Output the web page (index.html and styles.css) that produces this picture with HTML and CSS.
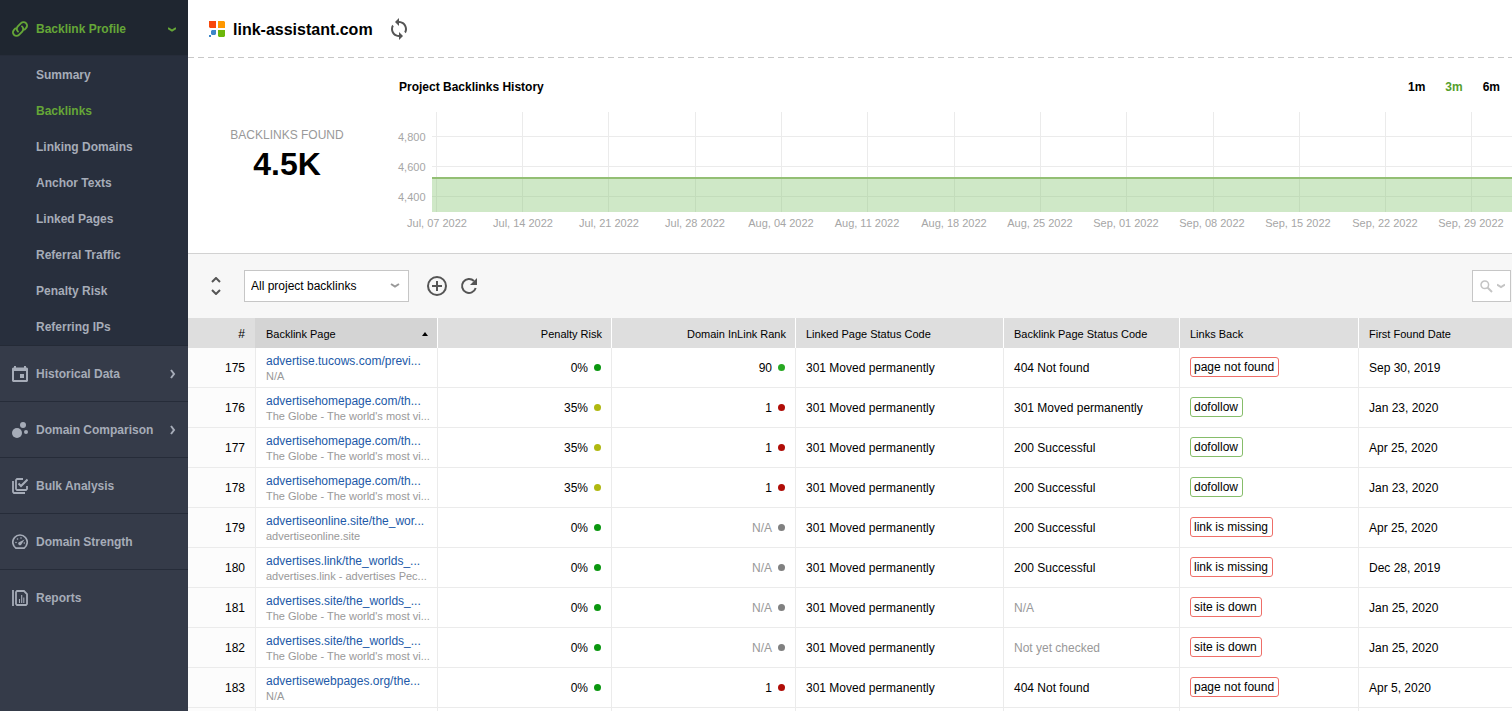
FILE: index.html
```html
<!DOCTYPE html>
<html lang="en">
<head>
<meta charset="utf-8">
<title>link-assistant.com - Backlinks</title>
<link rel="stylesheet" href="styles.css">
</head>
<body>
<div class="app">
  <nav class="sidebar" aria-label="Main">
    <button class="nav-item nav-open" type="button">
      <svg class="icon" width="16" height="16" viewBox="0 0 16 16" fill="none" stroke="currentColor" stroke-width="1.900" stroke-linecap="round"><path d="M6 10.600a3.600 3.600 0 0 1-.2-5.200L9 2.200a3.500 3.500 0 0 1 5 5L12.600 8.600"/><path d="M10 5.400a3.600 3.600 0 0 1 .2 5.200L7 13.800a3.500 3.500 0 0 1-5-5L3.400 7.400"/></svg>
      <span class="nav-label">Backlink Profile</span>
      <svg class="chevron" width="8" height="8" viewBox="0 0 8 8" fill="none" stroke="currentColor" stroke-width="2"><path d="M0 3l4 2.500L8 3"/></svg>
    </button>
    <div class="submenu">
      <a class="sub-link" href="#">Summary</a>
      <a class="sub-link current" href="#">Backlinks</a>
      <a class="sub-link" href="#">Linking Domains</a>
      <a class="sub-link" href="#">Anchor Texts</a>
      <a class="sub-link" href="#">Linked Pages</a>
      <a class="sub-link" href="#">Referral Traffic</a>
      <a class="sub-link" href="#">Penalty Risk</a>
      <a class="sub-link" href="#">Referring IPs</a>
    </div>
    <button class="nav-item" type="button">
      <svg class="icon" width="16" height="16" viewBox="0 0 16 16" fill="currentColor"><path fill-rule="evenodd" d="M2 0h2v1.500h8V0h2v1.500h1L16 2.500V15l-1 1H1l-1-1V2.500l1-1h1zM2 5v9h12V5z"/><path d="M8 8h4v4H8z"/></svg>
      <span class="nav-label">Historical Data</span>
      <svg class="chevron" width="6" height="10" viewBox="0 0 6 10" fill="none" stroke="currentColor" stroke-width="2"><path d="M1 1l3 4-3 4"/></svg>
    </button>
    <button class="nav-item" type="button">
      <svg class="icon" width="16" height="16" viewBox="0 0 16 16" fill="currentColor"><circle cx="5" cy="11" r="5"/><circle cx="11" cy="3" r="3"/><circle cx="14" cy="10" r="2"/></svg>
      <span class="nav-label">Domain Comparison</span>
      <svg class="chevron" width="6" height="10" viewBox="0 0 6 10" fill="none" stroke="currentColor" stroke-width="2"><path d="M1 1l3 4-3 4"/></svg>
    </button>
    <button class="nav-item" type="button">
      <svg class="icon" width="16" height="16" viewBox="0 0 16 16" fill="none" stroke="currentColor" stroke-width="1.800"><path d="M11 1H5L4 2v9l1 1h9l1-1V8"/><path d="M1 3v11l1 1h11"/><path d="M6.500 5.500L9 8l6.500-6.500" stroke-width="2"/></svg>
      <span class="nav-label">Bulk Analysis</span>
    </button>
    <button class="nav-item" type="button">
      <svg class="icon" width="16" height="16" viewBox="0 0 16 16" fill="currentColor"><path d="M4 14.200a7.200 7.200 0 1 1 8 0z" fill="none" stroke="currentColor" stroke-width="1.700"/><path d="M12.500 5.500L9 11a1.800 1.800 0 0 1-2.500-2.500z"/><circle cx="4" cy="8.500" r=".8"/><circle cx="5.500" cy="5" r=".8"/><circle cx="9" cy="4" r=".8"/><circle cx="12.300" cy="9" r=".8"/></svg>
      <span class="nav-label">Domain Strength</span>
    </button>
    <button class="nav-item" type="button">
      <svg class="icon" width="16" height="16" viewBox="0 0 16 16" fill="none" stroke="currentColor" stroke-width="1.800"><path d="M1 0v16"/><path d="M5 1h7l3 3v10l-1 1H5l-1-1V2z"/><path d="M7.500 9v4M9.700 5v8M11.800 7.500V13" stroke-width="1.100"/></svg>
      <span class="nav-label">Reports</span>
    </button>
  </nav>

  <main class="main">
    <header class="site-header">
      <svg width="16" height="16" viewBox="0 0 16 16"><path fill="#f8480c" d="M0 0h7v7H1L0 6z"/><path fill="#ff9800" d="M9 0h6l1 1v6H9z"/><path fill="#3d86c8" d="M3 9h4v4L6 14H3l-1-1v-3zM0 14h2v2H0z"/><path fill="#6cb70a" d="M9 9h7v6l-1 1h-5l-1-1z"/></svg>
      <h1 class="site-name">link-assistant.com</h1>
      <button class="icon-button" type="button" aria-label="Update project">
        <svg width="16" height="22" viewBox="4 1 16 22" fill="currentColor"><path d="M12 4V1L8 5l4 4V6c3.310 0 6 2.690 6 6 0 1.010-.25 1.970-.7 2.800l1.460 1.460C19.540 15.030 20 13.570 20 12c0-4.420-3.580-8-8-8zm0 14c-3.310 0-6-2.690-6-6 0-1.010.25-1.970.7-2.800L5.240 7.740C4.460 8.970 4 10.430 4 12c0 4.420 3.580 8 8 8v3l4-4-4-4z"/></svg>
      </button>
    </header>

    <section class="overview">
      <div class="total">
        <span class="total-label">BACKLINKS FOUND</span>
        <strong class="total-value">4.5K</strong>
      </div>
      <div class="history">
        <div class="history-head">
          <h2 class="history-title">Project Backlinks History</h2>
          <div class="ranges">
            <button class="range" type="button">1m</button>
            <button class="range selected" type="button">3m</button>
            <button class="range" type="button">6m</button>
          </div>
        </div>
        <svg class="chart" width="100%" height="124" role="img" aria-label="Backlinks from July to September 2022">
          <g class="grid-lines">
            <path d="M33 28.500h3000M33 58.500h3000M33 88.500h3000"/>
            <path d="M37.500 4v100M123.500 4v100M209.500 4v100M296.500 4v100M382.500 4v100M468.500 4v100M555.500 4v100M641.500 4v100M727.500 4v100M814.500 4v100M900.500 4v100M986.500 4v100M1072.500 4v100"/>
          </g>
          <rect class="area" x="33" y="70" width="100%" height="34"/>
          <rect class="area-line" x="33" y="69" width="100%" height="2"/>
          <g class="axis">
            <text x="-1" y="33">4,800</text>
            <text x="-1" y="63">4,600</text>
            <text x="-1" y="93">4,400</text>
          </g>
          <g class="axis dates">
            <text x="38" y="119">Jul, 07 2022</text>
            <text x="124" y="119">Jul, 14 2022</text>
            <text x="210" y="119">Jul, 21 2022</text>
            <text x="296" y="119">Jul, 28 2022</text>
            <text x="382" y="119">Aug, 04 2022</text>
            <text x="468" y="119">Aug, 11 2022</text>
            <text x="555" y="119">Aug, 18 2022</text>
            <text x="641" y="119">Aug, 25 2022</text>
            <text x="727" y="119">Sep, 01 2022</text>
            <text x="813" y="119">Sep, 08 2022</text>
            <text x="899" y="119">Sep, 15 2022</text>
            <text x="986" y="119">Sep, 22 2022</text>
            <text x="1072" y="119">Sep, 29 2022</text>
          </g>
        </svg>
      </div>
    </section>

    <div class="toolbar">
      <button class="icon-button expander" type="button" aria-label="Expand or collapse">
        <svg width="10" height="18" viewBox="0 0 10 18" fill="none" stroke="currentColor" stroke-width="2"><path d="M1 5l4-4 4 4M1 13l4 4 4-4"/></svg>
      </button>
      <div class="view-select">
        <select aria-label="Backlinks view"><option>All project backlinks</option></select>
        <svg width="10" height="6" viewBox="0 0 10 6" fill="none" stroke="currentColor" stroke-width="2"><path d="M1 1l4 2.500L9 1"/></svg>
      </div>
      <button class="icon-button add" type="button" aria-label="Add backlinks">
        <svg width="20" height="20" viewBox="0 0 20 20" fill="none" stroke="currentColor" stroke-width="2"><circle cx="10" cy="10" r="9"/><path d="M10 5v10M5 10h10"/></svg>
      </button>
      <button class="icon-button" type="button" aria-label="Refresh">
        <svg width="18" height="18" viewBox="0 0 18 18" fill="none" stroke="currentColor" stroke-width="2"><path d="M14 4a7 7 0 1 0 1.700 7"/><path d="M17 1v7h-7z" fill="currentColor" stroke="none"/></svg>
      </button>
      <button class="search" type="button" aria-label="Quick filter">
        <svg width="13" height="13" viewBox="0 0 13 13" fill="none" stroke="currentColor" stroke-width="1.500"><circle cx="4.800" cy="4.800" r="3.800"/><path d="M7.500 7.500L12 12" stroke-width="2"/></svg>
        <svg width="8" height="6" viewBox="0 0 8 6" fill="none" stroke="currentColor" stroke-width="2"><path d="M0 1.500l4 2.500 4-2.500"/></svg>
      </button>
    </div>

    <table class="backlinks">
      <colgroup><col class="c-num"><col class="c-page"><col class="c-risk"><col class="c-rank"><col class="c-linked"><col class="c-status"><col class="c-back"><col></colgroup>
      <thead>
        <tr>
          <th class="num">#</th>
          <th class="sorted" aria-sort="ascending"><button class="sort" type="button">Backlink Page <svg width="6" height="4" viewBox="0 0 6 4"><path d="M0 4l3-4 3 4z"/></svg></button></th>
          <th class="right">Penalty Risk</th>
          <th class="right">Domain InLink Rank</th>
          <th>Linked Page Status Code</th>
          <th>Backlink Page Status Code</th>
          <th>Links Back</th>
          <th>First Found Date</th>
        </tr>
      </thead>
      <tbody>
        <tr><td class="num">175</td><td><a class="page" href="#">advertise.tucows.com/previ...</a><span class="page-title">N/A</span></td><td class="right">0%<i class="dot green"></i></td><td class="right">90<i class="dot lime"></i></td><td>301 Moved permanently</td><td>404 Not found</td><td><span class="tag bad">page not found</span></td><td>Sep 30, 2019</td></tr>
        <tr><td class="num">176</td><td><a class="page" href="#">advertisehomepage.com/th...</a><span class="page-title">The Globe - The world's most vi...</span></td><td class="right">35%<i class="dot olive"></i></td><td class="right">1<i class="dot red"></i></td><td>301 Moved permanently</td><td>301 Moved permanently</td><td><span class="tag good">dofollow</span></td><td>Jan 23, 2020</td></tr>
        <tr><td class="num">177</td><td><a class="page" href="#">advertisehomepage.com/th...</a><span class="page-title">The Globe - The world's most vi...</span></td><td class="right">35%<i class="dot olive"></i></td><td class="right">1<i class="dot red"></i></td><td>301 Moved permanently</td><td>200 Successful</td><td><span class="tag good">dofollow</span></td><td>Apr 25, 2020</td></tr>
        <tr><td class="num">178</td><td><a class="page" href="#">advertisehomepage.com/th...</a><span class="page-title">The Globe - The world's most vi...</span></td><td class="right">35%<i class="dot olive"></i></td><td class="right">1<i class="dot red"></i></td><td>301 Moved permanently</td><td>200 Successful</td><td><span class="tag good">dofollow</span></td><td>Jan 23, 2020</td></tr>
        <tr><td class="num">179</td><td><a class="page" href="#">advertiseonline.site/the_wor...</a><span class="page-title">advertiseonline.site</span></td><td class="right">0%<i class="dot green"></i></td><td class="right muted">N/A<i class="dot grey"></i></td><td>301 Moved permanently</td><td>200 Successful</td><td><span class="tag bad">link is missing</span></td><td>Apr 25, 2020</td></tr>
        <tr><td class="num">180</td><td><a class="page" href="#">advertises.link/the_worlds_...</a><span class="page-title">advertises.link - advertises Pec...</span></td><td class="right">0%<i class="dot green"></i></td><td class="right muted">N/A<i class="dot grey"></i></td><td>301 Moved permanently</td><td>200 Successful</td><td><span class="tag bad">link is missing</span></td><td>Dec 28, 2019</td></tr>
        <tr><td class="num">181</td><td><a class="page" href="#">advertises.site/the_worlds_...</a><span class="page-title">The Globe - The world's most vi...</span></td><td class="right">0%<i class="dot green"></i></td><td class="right muted">N/A<i class="dot grey"></i></td><td>301 Moved permanently</td><td class="muted">N/A</td><td><span class="tag bad">site is down</span></td><td>Jan 25, 2020</td></tr>
        <tr><td class="num">182</td><td><a class="page" href="#">advertises.site/the_worlds_...</a><span class="page-title">The Globe - The world's most vi...</span></td><td class="right">0%<i class="dot green"></i></td><td class="right muted">N/A<i class="dot grey"></i></td><td>301 Moved permanently</td><td class="muted">Not yet checked</td><td><span class="tag bad">site is down</span></td><td>Jan 25, 2020</td></tr>
        <tr><td class="num">183</td><td><a class="page" href="#">advertisewebpages.org/the...</a><span class="page-title">N/A</span></td><td class="right">0%<i class="dot green"></i></td><td class="right">1<i class="dot red"></i></td><td>301 Moved permanently</td><td>404 Not found</td><td><span class="tag bad">page not found</span></td><td>Apr 5, 2020</td></tr>
        <tr class="blank"><td class="num"></td><td></td><td></td><td></td><td></td><td></td><td></td><td></td></tr>
      </tbody>
    </table>
  </main>
</div>
</body>
</html>
```
FILE: styles.css
```css
* {
  box-sizing: border-box;
}

body {
  margin: 0;
  font: 12px/16px "Liberation Sans", Arial, sans-serif;
  color: #000;
  background: #fff;
}

button,
select {
  margin: 0;
  padding: 0;
  border: 0;
  font: inherit;
  color: inherit;
  background: none;
}

.app {
  display: flex;
  height: 100vh;
  overflow: hidden;
}

/* Sidebar */
.sidebar {
  flex: none;
  width: 188px;
  background: #353b49;
  color: #a6acb8;
  font-weight: bold;
}

.nav-item {
  display: flex;
  align-items: center;
  gap: 8px;
  width: 100%;
  height: 56px;
  padding: 0 12px;
  border-bottom: 1px solid #262c39;
  text-align: left;
}

.nav-item:last-child {
  border-bottom: 0;
}

.nav-open {
  padding-top: 2px;
  background: #1f2630;
  color: #65a637;
}

.nav-label {
  flex: 1;
  white-space: nowrap;
}

.icon,
.chevron {
  flex: none;
}

.submenu {
  display: flex;
  flex-direction: column;
  padding-top: 1px;
  background: #282f3d;
  border-bottom: 1px solid #242a36;
}

.sub-link {
  padding: 10px 0 10px 36px;
  color: inherit;
  text-decoration: none;
}

.sub-link.current {
  color: #65a637;
}

/* Header */
.main {
  flex: 1;
  min-width: 0;
  overflow: hidden;
}

.site-header {
  display: flex;
  align-items: center;
  height: 58px;
  padding-left: 21px;
  background: repeating-linear-gradient(90deg, #c8c8c8 0 6px, #fff 6px 10px) bottom / 100% 1px no-repeat;
}

.site-name {
  margin: 0 18px 0 8px;
  padding-top: 2px;
  font-size: 16px;
  line-height: 20px;
}

.icon-button {
  display: flex;
  color: #555;
}

/* Overview */
.overview {
  display: flex;
  height: 196px;
  border-bottom: 1px solid #d2d2d2;
}

.total {
  display: flex;
  flex-direction: column;
  align-items: center;
  width: 211px;
  padding: 69px 13px 0 0;
}

.total-label {
  color: #999;
}

.total-value {
  font-size: 32px;
  line-height: 42px;
}

.history {
  flex: 1;
  min-width: 0;
}

.history-head {
  display: flex;
  justify-content: space-between;
  padding: 21px 12px 13px 0;
}

.history-title {
  margin: 0;
  font-size: 12px;
}

.ranges {
  display: flex;
  gap: 20px;
}

.range {
  font-weight: bold;
}

.range.selected {
  color: #55a02c;
}

.chart {
  display: block;
  overflow: visible;
}

.grid-lines {
  stroke: #ebebeb;
}

.area {
  fill: #88c674;
  fill-opacity: 0.4;
}

.area-line {
  fill: #93bf74;
}

.axis {
  font-size: 11px;
  fill: #a6a6a6;
}

.dates {
  text-anchor: middle;
}

/* Toolbar */
.toolbar {
  display: flex;
  align-items: center;
  height: 64px;
  padding-left: 23px;
  background: #f7f7f7;
}

.view-select {
  display: grid;
  align-items: center;
  width: 165px;
  height: 32px;
  margin: 0 18px 0 23px;
  border: 1px solid #c6c6c6;
  background: #fff;
  color: #999;
}

.view-select > * {
  grid-area: 1 / 1;
}

.view-select select {
  width: 100%;
  height: 30px;
  padding-left: 6px;
  appearance: none;
  color: #000;
}

.view-select svg {
  justify-self: end;
  margin-right: 8px;
  pointer-events: none;
}

.add {
  margin-right: 13px;
}

.search {
  display: flex;
  align-items: center;
  gap: 4px;
  width: 39px;
  height: 32px;
  margin: 0 1px 0 auto;
  padding-left: 7px;
  border: 1px solid #c6c6c6;
  background: #fff;
  color: #c4c4c4;
}

/* Table */
.backlinks {
  width: 100%;
  table-layout: fixed;
  border-collapse: separate;
  border-spacing: 0;
}

.c-num { width: 68px; }
.c-page { width: 182px; }
.c-risk { width: 174px; }
.c-rank { width: 184px; }
.c-linked { width: 208px; }
.c-status { width: 176px; }
.c-back { width: 179px; }

th {
  height: 30px;
  padding: 2px 9px 0 10px;
  border-right: 1px solid #fff;
  background: #dedede;
  font-size: 11px;
  font-weight: normal;
  text-align: left;
}

th.sorted {
  background: #d4d4d4;
}

th.num {
  border-color: #d4d4d4;
  font-size: 12px;
}

.sort {
  display: flex;
  align-items: center;
  justify-content: space-between;
  width: 100%;
}

td {
  height: 40px;
  padding: 0 9px 0 10px;
  border-right: 1px solid #ebebeb;
  border-bottom: 1px solid #ebebeb;
  white-space: nowrap;
}

th:last-child,
td:last-child {
  border-right: 0;
}

.num {
  padding-right: 10px;
  text-align: right;
}

td.num {
  background: #fcfcfc;
}

.right {
  text-align: right;
}

.page {
  display: block;
  line-height: 16px;
  color: #2159a8;
  text-decoration: none;
}

.page-title {
  display: block;
  font-size: 11px;
  line-height: 14px;
  color: #999;
}

.muted {
  color: #999;
}

.dot {
  display: inline-block;
  width: 7px;
  height: 7px;
  margin: 0 1px 1px 6px;
  border-radius: 50%;
}

.green { background: #0a970f; }
.lime { background: #27a822; }
.olive { background: #b0b810; }
.red { background: #b00d08; }
.grey { background: #808080; }

.tag {
  display: inline-block;
  margin-bottom: 1px;
  padding: 1px 4px 0 3px;
  border: 1px solid;
  border-radius: 3px;
  line-height: 17px;
}

.bad { border-color: #ee6e68; }
.good { border-color: #86bd6a; }
```
